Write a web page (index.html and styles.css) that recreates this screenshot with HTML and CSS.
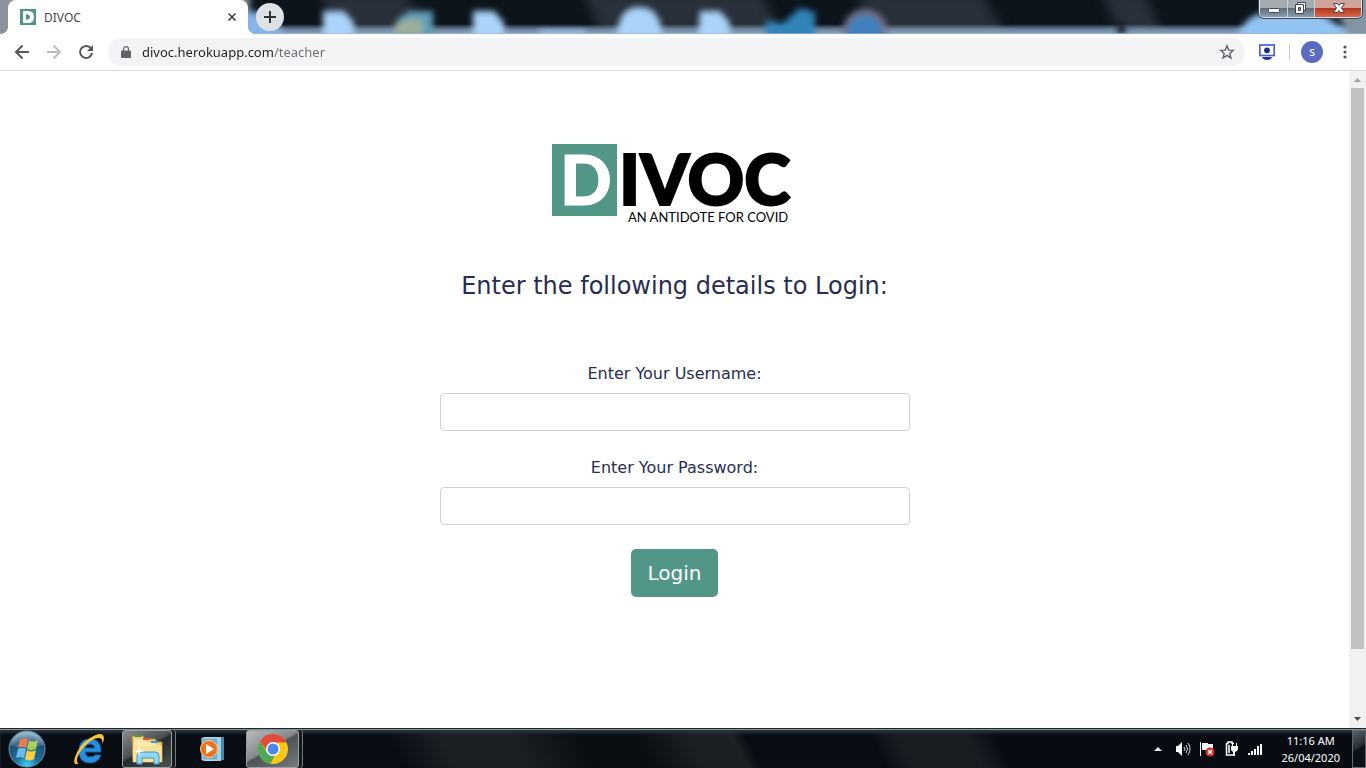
FILE: index.html
```html
<!DOCTYPE html>
<html lang="en">
<head>
<meta charset="utf-8">
<meta name="viewport" content="width=device-width, initial-scale=1">
<title>DIVOC</title>
<link rel="stylesheet" href="styles.css">
</head>
<body>
<header class="tabstrip">
  <svg class="wallpaper" viewBox="0 0 1366 34" preserveAspectRatio="none" aria-hidden="true">
    <defs>
      <linearGradient id="rim" x1="0" y1="0" x2="0" y2="1"><stop offset="0" stop-color="#8099b5" stop-opacity="0"/><stop offset=".5" stop-color="#7e98b5" stop-opacity=".8"/><stop offset="1" stop-color="#8da9c8"/></linearGradient>
    </defs>
    <rect width="1366" height="34" fill="#0c141c"/>
    <path class="wide-blur" d="M318 -10h85l30 54h-90zM582 -10h178l25 54H606zM855 -10h125l30 54H875zM1100 -10h42l25 54h-42z" fill="#28303a"/>
    <rect width="1366" height="10" y="24" fill="url(#rim)"/>
    <g class="soft-blur" fill="#aad4fa">
      <path d="M-20 -20h270v60H-20z" fill="#8b929b"/>
      <path d="M244 12h25l20 30h-45z" fill="#86b5ea"/>
      <path d="M323 11h21l10 12v18h-31zM473 11h21l10 12v18h-31zM700 11h20l10 12v18h-32z"/>
      <path d="M397 20l12-9h24v28h-38z" fill="#5f9eb9"/><path d="M395 24l12-5h16v17h-30z" fill="#9caf9c"/>
      <path d="M617 39q0-32 22-32 23 0 23 32z"/>
      <path d="M540 31h45v5h-45z"/>
      <path d="M765 20l17 4 18-16 15 4v25h-48z" fill="#3183b9"/>
      <circle cx="865" cy="31" r="22" fill="#777487"/><circle cx="865" cy="32" r="17" fill="#4080bf"/>
      <path d="M1235 42q10-30 35-30h50l40 30z" fill="#91c4f1"/>
      <path d="M1322 -20h70v64h-40z" fill="#8494a2"/>
      <path d="M1118 25h7v9h-7z" fill="#05090f"/>
    </g>
    <path d="M0 33h1366v1H0z" fill="#9bb3cc" opacity=".6"/>
  </svg>
  <div class="tab">
    <svg class="favicon" viewBox="0 0 16 16" aria-hidden="true"><path fill="#4f9585" d="M0 0h16v16H0z"/><path fill="#fff" fill-rule="evenodd" d="M3 2h5q6 0 6 6t-6 6H3zm3 3v6l3-1q2-2 0-4z"/></svg>
    <span class="tab-title">DIVOC</span>
    <button class="tab-close" aria-label="Close tab"><svg width="10" height="10" viewBox="0 0 10 10"><path d="m1.500 1.500 7 7m0-7-7 7" stroke="#3c4043" stroke-width="1.600"/></svg></button>
  </div>
  <button class="new-tab" aria-label="New tab"><svg width="12" height="12" viewBox="0 0 12 12"><path d="M6 0v12M0 6h12" stroke="#303236" stroke-width="2"/></svg></button>
  <div class="window-buttons">
    <button class="win" aria-label="Minimize"><svg width="27" height="18" viewBox="0 0 27 18"><rect x="8.500" y="8.500" width="11" height="4" rx="1" fill="#fff" stroke="#414754"/></svg></button>
    <button class="win" aria-label="Restore"><svg width="26" height="18" viewBox="0 0 26 18"><path d="M9.500 2.500h8v8h-8z" fill="#fff" stroke="#414754"/><path d="M7.500 4.500h8v9h-8z" fill="#fff" stroke="#414754"/><path d="M10.500 7.500h2v3h-2z" fill="#8291a2" stroke="#414754"/></svg></button>
    <button class="win win-close" aria-label="Close"><svg width="46" height="18" viewBox="0 0 46 18"><path d="M18.500 3.500h4l1.500 2 1.500-2h4l-3 4.500 3 4.500h-4L24 10.500l-1.500 2h-4l3-4.500z" fill="#fff" stroke="#4f4147"/></svg></button>
  </div>
</header>
<nav class="toolbar" aria-label="Browser">
  <button class="tool" aria-label="Back"><svg viewBox="0 0 16 16"><path d="M15 8H2m6.500-6.500L2 8l6.500 6.500" fill="none" stroke="#53565b" stroke-width="2"/></svg></button>
  <button class="tool" aria-label="Forward"><svg viewBox="0 0 16 16"><path d="M1 8h13M7.500 1.500 14 8l-6.500 6.500" fill="none" stroke="#babcbe" stroke-width="2"/></svg></button>
  <button class="tool" aria-label="Reload"><svg viewBox="0 0 16 16"><path d="M13 4.500A6 6 0 1 0 14 9" fill="none" stroke="#53565b" stroke-width="2"/><path d="M15 1v6H9z" fill="#53565b"/></svg></button>
  <div class="omnibox">
    <svg class="lock" width="10" height="12" viewBox="0 0 10 12"><path d="M1 4.500h8q1 0 1 1V11q0 1-1 1H1q-1 0-1-1V5.500q0-1 1-1z" fill="#5f6368"/><path d="M2.500 5V3a2.500 2.300 0 0 1 5 0v2" fill="none" stroke="#5f6368" stroke-width="1.200"/></svg>
    <input class="address" type="text" aria-label="Address" value="divoc.herokuapp.com/teacher">
    <button class="star" aria-label="Bookmark this page"><svg width="16" height="16" viewBox="0 0 16 16"><path d="m8 1.800 1.700 4.300 4.600.3-3.500 3 1.100 4.500L8 11.400l-3.900 2.500 1.100-4.500-3.500-3 4.600-.3z" fill="none" stroke="#5f6368" stroke-width="1.400"/></svg></button>
  </div>
  <button class="ext" aria-label="Extension"><svg width="16" height="16" viewBox="0 0 16 16"><rect x=".8" y="1" width="14.400" height="10.500" fill="#fff" stroke="#4b5bdc" stroke-width="1.700"/><circle cx="8" cy="6.300" r="2.900" fill="#1c2c7d"/><path d="M3 13h10q-1 3-5 3t-5-3z" fill="#26358c"/></svg></button>
  <span class="divider"></span>
  <button class="avatar" aria-label="Profile">s</button>
  <button class="more" aria-label="Menu"><svg width="4" height="14" viewBox="0 0 4 14" fill="#53565b"><circle cx="2" cy="2" r="1.600"/><circle cx="2" cy="7" r="1.600"/><circle cx="2" cy="12" r="1.600"/></svg></button>
</nav>
<div class="viewport">
  <main class="page">
    <svg class="logo" width="240" height="84" viewBox="0 0 240 84" role="img" aria-label="DIVOC, an antidote for COVID">
      <path d="M2 4h65v72H2z" fill="#529687"/>
      <text class="logo-initial" x="10" y="65">D</text>
      <text class="logo-word" x="69" y="65">IVOC</text>
      <text class="logo-tag" x="78" y="82">AN ANTIDOTE FOR COVID</text>
    </svg>
    <h1 class="title">Enter the following details to Login:</h1>
    <form class="login">
      <label for="username">Enter Your Username:</label>
      <input class="field" id="username" type="text">
      <label for="password">Enter Your Password:</label>
      <input class="field" id="password" type="password">
      <button class="submit" type="button">Login</button>
    </form>
  </main>
  <div class="scrollbar" aria-hidden="true">
    <svg width="17" height="17" viewBox="0 0 17 17"><path d="m5 11 3.500-4L12 11z" fill="#a3a3a3"/></svg>
    <div class="track"><div class="thumb"></div></div>
    <svg width="17" height="17" viewBox="0 0 17 17"><path d="m5 6 3.500 4L12 6z" fill="#505050"/></svg>
  </div>
</div>
<footer class="taskbar">
  <button class="start" aria-label="Start"><svg width="40" height="38" viewBox="0 0 40 38">
    <defs><radialGradient id="orb" cx=".5" cy=".95" r=".9"><stop offset="0" stop-color="#3fd0f5"/><stop offset=".35" stop-color="#1b719e"/><stop offset=".75" stop-color="#205078"/><stop offset="1" stop-color="#8db1c8"/></radialGradient></defs>
    <circle cx="20" cy="19" r="18" fill="url(#orb)" stroke="#6d91a5"/>
    <path d="M13 10q4-3 8-1l-2 9q-4-2-8 0z" fill="#e6652f"/><path d="M22 10q4 3 9 0l-2 9q-5 3-9 0z" fill="#9bc845"/><path d="M11 19q4-2 8 0l-2 9q-4-2-8 0z" fill="#6dbbea"/><path d="M20 20q4 3 9 0l-2 9q-5 3-9 0z" fill="#f8ce43"/>
    <path d="M4 15Q7 3 20 3t16 12Q20 20 4 15z" fill="#fff" opacity=".16"/></svg></button>
  <button class="task ie" aria-label="Internet Explorer"><svg width="36" height="36" viewBox="0 0 36 36">
    <path d="M30 21H14q1 5 5 5 4 0 5-2h6q-3 8-11 8-11 0-11-12Q8 8 19 8t11 13zM14 17h10q-1-4-5-4t-5 4z" fill="#268fdc" stroke="#1665ad"/>
    <path d="M9 32Q1 36 4 26 8 14 19 7q13-8 14 0 0 3-2 6 1-5-2-6-7-1-16 9-8 10-7 14 0 3 3 2z" fill="#f9c539"/></svg></button>
  <button class="task open explorer" aria-label="File Explorer"><svg width="34" height="32" viewBox="0 0 34 32">
    <path d="M2 3h11l2 3h10l2 3h5v20H3z" fill="#edcf74" stroke="#b68b2e"/><path d="M4 6h10l2 3h8l2 3h5v17H4z" fill="#faeaa7"/>
    <path d="M5 2h6v2H5z" fill="#29a342"/><path d="M13 5h6v2h-6z" fill="#df4d3b"/><path d="M21 8h7v2h-7z" fill="#379ce5"/>
    <path d="M3 13h29v16H3z" fill="#f6e196"/><path d="M7 31V23q0-4 4-4h14q4 0 4 4v8h-5v-6H12v6z" fill="#92d5f4" stroke="#3e9bc4"/><path d="m9 12 1 5 5 1-5 1-1 5-1-5-4-1 4-1z" fill="#fff"/></svg></button>
  <button class="task media" aria-label="Windows Media Player"><svg width="28" height="28" viewBox="0 0 28 28">
    <path d="M8 2h18v23l-10 1z" fill="#3f88b0"/><path d="M6 2h17v24H6z" fill="#9ed0e5"/><path d="M4 3h16v22H4z" fill="#6eaecf" stroke="#b8e0ed"/>
    <circle cx="11" cy="14" r="8.500" fill="#ed7220" stroke="#ffc89d"/><path d="m8 9 8 5-8 5z" fill="#fff"/></svg></button>
  <button class="task open chrome" aria-label="Google Chrome"><svg width="32" height="32" viewBox="0 0 32 32">
    <circle cx="16" cy="16" r="15" fill="#fbc916"/>
    <path d="M3 8.500A15 15 0 0 1 29.500 9.500H16a6.500 6.500 0 0 0-6.400 8z" fill="#df4b3e"/>
    <path d="M3 8.500 10.300 20q2.700 3.500 7 3l-3.800 7.900A15 15 0 0 1 3 8.500z" fill="#4caa58"/>
    <circle cx="16" cy="16" r="7" fill="#fff"/><circle cx="16" cy="16" r="5.500" fill="#4b88ed"/></svg></button>
  <div class="tray">
    <button class="tray-btn" aria-label="Show hidden icons"><svg width="10" height="16" viewBox="0 0 10 16"><path d="m1 10 4-4 4 4z" fill="#e8ebed"/></svg></button>
    <button class="tray-btn" aria-label="Volume"><svg width="16" height="16" viewBox="0 0 16 16"><path d="M1 5h2l4-4v14l-4-4H1z" fill="#fff"/><path d="M9 6q2 2 0 4m2-6q3 4 0 8m2-10q4 6 0 12" fill="none" stroke="#d0d5d8"/></svg></button>
    <button class="tray-btn" aria-label="Action Center"><svg width="16" height="16" viewBox="0 0 16 16"><path d="M1.500 1v14" stroke="#fff"/><path d="M3 2h6v1h5v7H9V9H3z" fill="#f5f5f5"/><circle cx="11" cy="11" r="4.500" fill="#d82a24"/><path d="m9 9 4 4m0-4-4 4" stroke="#fff" stroke-width="1.500"/></svg></button>
    <button class="tray-btn" aria-label="Power"><svg width="16" height="16" viewBox="0 0 16 16"><path d="M10 14H3.500V2.500H5V1h4v1.500h2" fill="none" stroke="#fff" stroke-width="1.500"/><path d="M5 4h2v8H5z" fill="#cbd0d2"/><path d="M8 5h7v3q0 2-3 3v4h-2v-4Q8 10 8 8zM9 2h1v3H9zm4 0h1v3h-1z" fill="#fff"/></svg></button>
    <button class="tray-btn" aria-label="Network"><svg width="16" height="16" viewBox="0 0 16 16"><path d="M1 12h2v2H1zm3-2h2v4H4zm3-2h2v6H7zm3-3h2v9h-2zm3-2h2v11h-2z" fill="#fff"/></svg></button>
    <div class="clock"><time>11:16 AM</time><time>26/04/2020</time></div>
    <button class="show-desktop" aria-label="Show desktop"></button>
  </div>
</footer>
</body>
</html>
```

FILE: styles.css
```css
* { box-sizing: border-box; }
body {
  margin: 0;
  height: 100vh;
  display: flex;
  flex-direction: column;
  background: #fff;
  color: #272d50;
  font-family: "Noto Sans", sans-serif;
}
button {
  margin: 0;
  padding: 0;
  border: 0;
  background: none;
  font-family: inherit;
  display: flex;
  align-items: center;
  justify-content: center;
}
svg { display: block; flex: none; }

/* Tab strip */
.tabstrip {
  position: relative;
  flex: none;
  display: flex;
  align-items: flex-start;
  height: 34px;
  padding: 0 4px 0 8px;
}
.wallpaper { position: absolute; inset: 0; width: 100%; height: 100%; }
.soft-blur { filter: blur(3px); }
.wide-blur { filter: blur(6px); }
.tab {
  position: relative;
  display: flex;
  align-items: center;
  gap: 8px;
  width: 240px;
  height: 34px;
  padding: 0 10px 0 12px;
  background: #fff;
  border-radius: 8px 8px 0 0;
}
.tab::before, .tab::after {
  content: "";
  position: absolute;
  bottom: 0;
  width: 8px;
  height: 8px;
}
.tab::before { left: -8px; background: radial-gradient(circle at 0 0, transparent 8px, #fff 8px); }
.tab::after { right: -8px; background: radial-gradient(circle at 100% 0, transparent 8px, #fff 8px); }
.favicon { width: 16px; height: 16px; }
.tab-title { flex: 1; font-size: 12px; color: #45494d; }
.tab-close { width: 12px; height: 16px; }
.new-tab {
  position: relative;
  width: 28px;
  height: 28px;
  margin: 3px 0 0 8px;
  border-radius: 50%;
  background: #dee1e6;
}
.window-buttons {
  position: relative;
  display: flex;
  margin-left: auto;
  border: 1px solid #dce5ee;
  border-top: 0;
  border-radius: 0 0 5px 5px;
  overflow: hidden;
  box-shadow: 0 0 0 1px #39424e;
}
.win {
  height: 17px;
  border-right: 1px solid #c8d0d9;
  background: linear-gradient(#a5abb2 45%, #626d7a 50%, #8b9cad);
}
.win-close { border-right: 0; background: linear-gradient(#cfa39a 45%, #b23820 50%, #d86749); }

/* Toolbar */
.toolbar {
  flex: none;
  display: flex;
  align-items: center;
  height: 37px;
  padding: 0 19px 0 14px;
  border-bottom: 1px solid #dadce0;
}
.tool { width: 16px; height: 16px; margin-right: 16px; }
.tool svg { width: 16px; height: 16px; }
.omnibox {
  flex: 1;
  display: flex;
  align-items: center;
  gap: 11px;
  height: 28px;
  margin-left: -2px;
  padding: 0 10px 0 13px;
  border-radius: 14px;
  background: #f1f3f4;
}
.address {
  flex: 1;
  min-width: 0;
  height: 24px;
  padding: 0;
  border: 0;
  outline: 0;
  color: #202124;
  background: linear-gradient(90deg, #202124 132px, #6b6f74 132px);
  background-clip: text;
  -webkit-background-clip: text;
  -webkit-text-fill-color: transparent;
  font: 13px "Noto Sans", sans-serif;
}
.ext { margin-left: 14px; }
.divider { width: 1px; height: 16px; margin: 0 11px 0 14px; background: #c9cbce; }
.avatar {
  width: 22px;
  height: 22px;
  border-radius: 50%;
  background: #5c6bc0;
  color: #fff;
  font-size: 12px;
  line-height: 20px;
}
.more { width: 4px; margin-left: 20px; }

/* Page */
.viewport { flex: 1; min-height: 0; display: flex; }
.page {
  flex: 1;
  display: flex;
  flex-direction: column;
  align-items: center;
  padding: 69px 16px 0;
}
.logo { margin-right: 9px; overflow: visible; }
.logo-initial {
  font: 900 68px Lato, sans-serif;
  fill: #fff;
  stroke: #fff;
}
.logo-word {
  font: 900 70px Lato, sans-serif;
  stroke: #000;
  stroke-width: 2px;
}
.logo-tag { font: 13px Lato, sans-serif; }
.title {
  margin: 44px 0 0;
  font: 24px/36px "DejaVu Sans", sans-serif;
}
.login {
  display: flex;
  flex-direction: column;
  align-items: center;
  width: 100%;
  max-width: 470px;
  padding-top: 58px;
  font: 16px/24px "DejaVu Sans", sans-serif;
}
.field {
  width: 100%;
  height: 38px;
  margin: 7px 0 24px;
  padding: 6px 12px;
  border: 1px solid #ced0da;
  border-radius: 4px;
  background: #fff;
  font: inherit;
}
.field + label { padding-top: 1px; }
.submit {
  height: 48px;
  padding: 0 17px;
  border-radius: 5px;
  background: #529687;
  color: #fff;
  font: 20px "DejaVu Sans", sans-serif;
}
.scrollbar {
  display: flex;
  flex-direction: column;
  width: 17px;
  background: #f1f1f1;
}
.track { flex: 1; padding: 0 2px; }
.thumb { height: 90%; background: #c1c1c1; }

/* Taskbar */
.taskbar {
  flex: none;
  display: flex;
  align-items: center;
  height: 40px;
  padding-left: 7px;
  border-top: 1px solid #1c262d;
  box-shadow: inset 0 1px #84929b, inset 0 4px 3px #29333a;
  background: linear-gradient(65deg, #080d14 0 29%, #1b2024 33% 38%, #090e12 43% 47%, #1b2023 51% 54%, #080d14 55% 64%, #191d22 66% 71%, #080c12 73%);
}
.task { height: 38px; }
.ie { width: 36px; margin: 0 15px 0 24px; }
.open {
  border: 1px solid #9b9fa2;
  border-radius: 3px;
  background: linear-gradient(150deg, #b9bbbc, #85898b 45%, #4e5356 50%, #767b7e);
  box-shadow: 3px 0 #14191c, 4px 0 #74797b;
}
.explorer { width: 50px; margin-right: 26px; background: linear-gradient(150deg, #888c8e, #4b5052 45%, #24292c 50%, #4b5052); }
.media { width: 28px; margin-right: 20px; }
.chrome { width: 53px; }
.tray { display: flex; align-items: center; height: 100%; margin-left: auto; color: #fff; }
.tray-btn { margin-right: 8px; }
.tray-btn:first-child { margin-right: 12px; }
.clock {
  display: flex;
  flex-direction: column;
  align-items: center;
  margin: 0 12px 0 10px;
  font-size: 11px;
  line-height: 17px;
}
.show-desktop {
  width: 14px;
  height: 38px;
  border: 1px solid #60686d;
  background: linear-gradient(150deg, #5c6366, #252b30 45%, #0d1217 50%);
}
```
